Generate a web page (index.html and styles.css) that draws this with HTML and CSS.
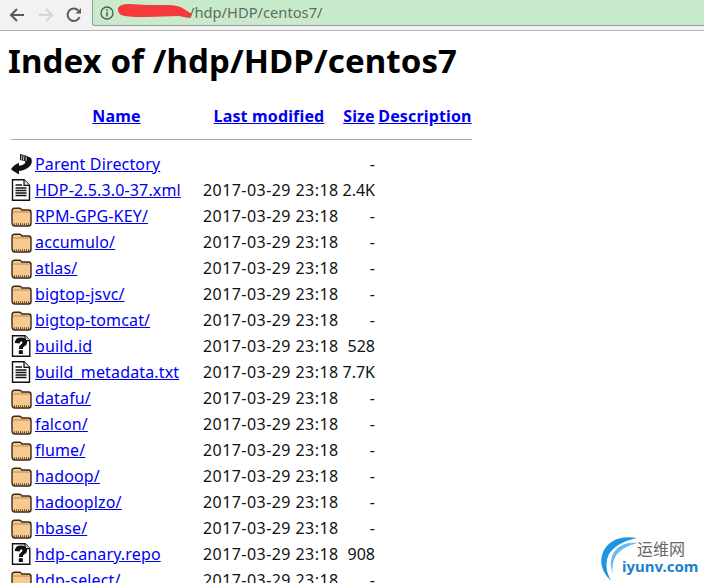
FILE: index.html
```html
<!DOCTYPE html>
<html lang="en">
<head>
<meta charset="utf-8">
<title>Index of /hdp/HDP/centos7</title>
<link rel="stylesheet" href="styles.css">
</head>
<body>
<svg width="0" height="0" class="defs">
  <defs>
    <symbol id="folder" viewBox="0 0 21 22">
      <path d="M1 17.5 V6 Q1 3.2 3.5 3.2 H8.5 Q10 3.2 10.7 5 H17.5 Q20 5 20 7.5 V18.5 Q20 21 17.5 21 H4 Q1 21 1 17.5Z" fill="#f8c98e" stroke="#3a2a18" stroke-width="1.4"/>
      <path d="M2 7 H19" stroke="#b98a55" stroke-width="1"/>
      <path d="M3 19.3 H18.5" stroke="#6b4a22" stroke-width="2" stroke-dasharray="1 1"/>
    </symbol>
    <symbol id="text" viewBox="0 0 21 22">
      <path d="M1.5 .8 H13 L18.5 6.3 V21.2 H1.5Z" fill="#fff" stroke="#111" stroke-width="1.4"/>
      <path d="M13 .8 V6.3 H18.5" fill="#ddd" stroke="#111" stroke-width="1.2"/>
      <path d="M4.5 6 H11 M4.5 9 H15.5 M4.5 11.5 H15.5 M4.5 14 H15.5 M4.5 16.5 H15.5" stroke="#111" stroke-width="1.4"/>
    </symbol>
    <symbol id="unknown" viewBox="0 0 21 22">
      <path d="M1.5 .8 H14 L18.8 5.6 V21.2 H1.5Z" fill="#fff" stroke="#111" stroke-width="1.4"/>
      <path d="M14 .8 V5.6 H18.8" fill="#ddd" stroke="#111" stroke-width="1.2"/>
      <path d="M3.8 8 Q4 2.6 10 2.6 Q16.2 2.6 16.2 7.3 Q16.2 10 13.4 11.2 Q11.8 12 11.8 14 H7.8 Q7.8 10.4 10.2 9.2 Q11.8 8.4 11.4 7.2 Q10.8 6 9.8 6.4 Q8.6 6.8 8.6 8.4Z" fill="#111"/>
      <rect x="7.8" y="15.2" width="4" height="3.8" fill="#111"/>
    </symbol>
    <symbol id="back" viewBox="0 0 21 22">
      <path d="M9 1 L15 2.5 L20 5 Q22 9.5 19 13 Q14.5 17.5 8 18 L8 21.5 L0 16.5 Q2.5 11.5 8 10 L8 12.8 Q12 12.5 14 10.2 Q15 8.8 13.5 8 L9 7Z" fill="#111"/>
      <path d="M11 2 L10.5 6.8 M13 2.5 L12.5 7.2 M15.3 3.5 L15 7.8" stroke="#fff" stroke-width=".8"/>
    </symbol>
  </defs>
</svg>
<header class="toolbar">
  <svg class="nav" viewBox="0 0 18 18"><path d="M16 9 H3 M9 3 L3 9 L9 15" fill="none" stroke="#5a5a5a" stroke-width="2"/></svg>
  <svg class="nav" viewBox="0 0 18 18"><path d="M2 9 H15 M9 3 L15 9 L9 15" fill="none" stroke="#d4d4d4" stroke-width="2"/></svg>
  <svg class="nav" viewBox="0 0 18 18"><path d="M14.6 11 A6.2 6.2 0 1 1 13.4 4.6" fill="none" stroke="#5a5a5a" stroke-width="2"/><path d="M10.5 7.5 H16 V2Z" fill="#5a5a5a"/></svg>
  <div class="omnibox">
    <svg class="info" viewBox="0 0 14 14"><circle cx="7" cy="7" r="6" fill="none" stroke="#555" stroke-width="1.3"/><path d="M7 6 V10.5 M7 3.3 V5" stroke="#555" stroke-width="1.5"/></svg>
    <span class="url">/hdp/HDP/centos7/</span>
    <svg class="redact" viewBox="0 0 76 14"><path d="M1 4 Q3 0 12 0 L30 1 L50 1 Q62 1 67 5 L75 10 L72 14 Q66 13 62 12 L30 13 Q12 13.5 4 11 Q0 8 1 4Z" fill="#f53a3c"/></svg>
  </div>
</header>
<main class="page">
  <h1 class="title">Index of /hdp/HDP/centos7</h1>
  <table class="listing">
    <colgroup><col class="c-icon"><col class="c-name"><col class="c-date"><col class="c-size"><col class="c-desc"></colgroup>
    <thead>
      <tr class="head"><th></th><th><a href="#">Name</a></th><th><a href="#">Last modified</a></th><th><a href="#">Size</a></th><th><a href="#">Description</a></th></tr>
      <tr class="rule"><th colspan="5"><hr></th></tr>
    </thead>
    <tbody>
      <tr><td><svg class="ico"><use href="#back"/></svg></td><td><a href="#">Parent Directory</a></td><td></td><td class="sz">-</td><td></td></tr>
      <tr><td><svg class="ico"><use href="#text"/></svg></td><td><a href="#">HDP-2.5.3.0-37.xml</a></td><td class="dt">2017-03-29 23:18</td><td class="sz">2.4K</td><td></td></tr>
      <tr><td><svg class="ico"><use href="#folder"/></svg></td><td><a href="#">RPM-GPG-KEY/</a></td><td class="dt">2017-03-29 23:18</td><td class="sz">-</td><td></td></tr>
      <tr><td><svg class="ico"><use href="#folder"/></svg></td><td><a href="#">accumulo/</a></td><td class="dt">2017-03-29 23:18</td><td class="sz">-</td><td></td></tr>
      <tr><td><svg class="ico"><use href="#folder"/></svg></td><td><a href="#">atlas/</a></td><td class="dt">2017-03-29 23:18</td><td class="sz">-</td><td></td></tr>
      <tr><td><svg class="ico"><use href="#folder"/></svg></td><td><a href="#">bigtop-jsvc/</a></td><td class="dt">2017-03-29 23:18</td><td class="sz">-</td><td></td></tr>
      <tr><td><svg class="ico"><use href="#folder"/></svg></td><td><a href="#">bigtop-tomcat/</a></td><td class="dt">2017-03-29 23:18</td><td class="sz">-</td><td></td></tr>
      <tr><td><svg class="ico"><use href="#unknown"/></svg></td><td><a href="#">build.id</a></td><td class="dt">2017-03-29 23:18</td><td class="sz">528</td><td></td></tr>
      <tr><td><svg class="ico"><use href="#text"/></svg></td><td><a href="#">build_metadata.txt</a></td><td class="dt">2017-03-29 23:18</td><td class="sz">7.7K</td><td></td></tr>
      <tr><td><svg class="ico"><use href="#folder"/></svg></td><td><a href="#">datafu/</a></td><td class="dt">2017-03-29 23:18</td><td class="sz">-</td><td></td></tr>
      <tr><td><svg class="ico"><use href="#folder"/></svg></td><td><a href="#">falcon/</a></td><td class="dt">2017-03-29 23:18</td><td class="sz">-</td><td></td></tr>
      <tr><td><svg class="ico"><use href="#folder"/></svg></td><td><a href="#">flume/</a></td><td class="dt">2017-03-29 23:18</td><td class="sz">-</td><td></td></tr>
      <tr><td><svg class="ico"><use href="#folder"/></svg></td><td><a href="#">hadoop/</a></td><td class="dt">2017-03-29 23:18</td><td class="sz">-</td><td></td></tr>
      <tr><td><svg class="ico"><use href="#folder"/></svg></td><td><a href="#">hadooplzo/</a></td><td class="dt">2017-03-29 23:18</td><td class="sz">-</td><td></td></tr>
      <tr><td><svg class="ico"><use href="#folder"/></svg></td><td><a href="#">hbase/</a></td><td class="dt">2017-03-29 23:18</td><td class="sz">-</td><td></td></tr>
      <tr><td><svg class="ico"><use href="#unknown"/></svg></td><td><a href="#">hdp-canary.repo</a></td><td class="dt">2017-03-29 23:18</td><td class="sz">908</td><td></td></tr>
      <tr><td><svg class="ico"><use href="#folder"/></svg></td><td><a href="#">hdp-select/</a></td><td class="dt">2017-03-29 23:18</td><td class="sz">-</td><td></td></tr>
    </tbody>
  </table>
</main>
<aside class="mark">
  <svg class="mark-swirl" viewBox="0 0 42 46"><path d="M37 2 Q12 -2 3 16 Q-3 32 11 45 Q3 30 9 18 Q17 6 37 2Z" fill="#1f95e0"/><path d="M38 7 Q22 5 14 16 Q8 26 13 38 Q11 27 17 18 Q24 10 38 7Z" fill="#63bdf0"/></svg>
  <span class="mark-cn">运维网</span>
  <span class="mark-en">iyunv.com</span>
</aside>
</body>
</html>
```

FILE: styles.css
```css
html, body {
  margin: 0;
  height: 583px;
  overflow: hidden;
  background: #fff;
}
body {
  position: relative;
  font-family: "Noto Sans", sans-serif;
  color: #111;
}
.defs { position: absolute; }

.toolbar {
  display: flex;
  align-items: center;
  height: 30px;
  background: #f2f2f2;
  border-bottom: 1px solid #b5b5b5;
}
.nav { width: 18px; height: 18px; margin-left: 8px; margin-right: 1px; }
.nav + .nav { margin-left: 10px; }
.nav:nth-of-type(3) { margin-left: 9px; margin-right: 0; }
.omnibox {
  position: relative;
  flex: 1;
  display: flex;
  align-items: center;
  height: 25px;
  padding-left: 7px;
  margin-left: 9px;
  background: #c8eccb;
  border-left: 1px solid #9a9a9a;
  border-bottom: 1px solid #9a9a9a;
  border-radius: 0 0 0 3px;
  align-self: flex-start;
}
.info { width: 14px; height: 14px; }
.url {
  margin-left: 75px;
  margin-top: -2px;
  font-size: 14.7px;
  color: #5f6b61;
  white-space: nowrap;
}
.redact { position: absolute; left: 24px; top: 4px; width: 76px; height: 14px; }

.page { padding: 0 8px; }
.title {
  margin: 11px 0 24px;
  font-size: 33px;
  line-height: 37px;
  font-weight: 700;
  letter-spacing: .1px;
  color: #000;
  white-space: nowrap;
}
.listing {
  table-layout: fixed;
  border-collapse: collapse;
  width: 461px;
  margin-left: 3px;
  font-size: 16px;
}
.c-icon { width: 24px; }
.c-name { width: 163px; }
.c-date { width: 142px; }
.c-size { width: 38px; }
.c-desc { width: 94px; }
.listing a { color: #0000ee; }
.listing th, .listing td { padding: 0; white-space: nowrap; }
.head { height: 26px; }
.head th { font-weight: 700; text-align: center; letter-spacing: .15px; }
.rule { height: 22px; }
.rule th { padding-bottom: 2px; }
.rule hr { margin: 0; border: 0; height: 1px; background: #a8a8a8; }
.listing td { height: 26px; line-height: 26px; vertical-align: middle; letter-spacing: .15px; }
.ico { display: block; width: 21px; height: 22px; }
.listing td.dt { padding-left: 5px; letter-spacing: .44px; }
.listing td.sz { text-align: right; padding-right: 3px; letter-spacing: 0; }

.mark {
  position: absolute;
  right: 0;
  bottom: 0;
  width: 104px;
  height: 50px;
}
.mark-swirl { position: absolute; left: 0; top: 3px; width: 42px; height: 46px; }
.mark-cn { position: absolute; left: 37px; top: 7px; font: 16px/16px "Noto Sans CJK SC", sans-serif; color: #666; white-space: nowrap; }
.mark-en { position: absolute; left: 22px; top: 25px; font: 700 15px/16px "Noto Sans", sans-serif; color: #1c80d0; white-space: nowrap; }
```
